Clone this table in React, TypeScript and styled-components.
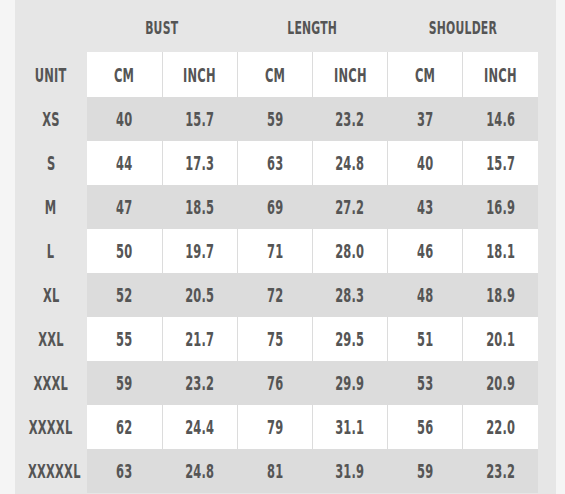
import * as React from "react";
import styled, { createGlobalStyle } from "styled-components";

const GlobalStyle = createGlobalStyle`
  html, body {
    margin: 0;
    padding: 0;
    background-color: #f5f5f5;
  }
`;

const Page = styled.div`
  width: 565px;
  height: 494px;
  overflow: hidden;
  background-color: #f5f5f5;
`;

const Panel = styled.div`
  margin-left: 15px;
  width: 541px;
  height: 494px;
  box-sizing: border-box;
  padding-right: 18px;
  background-color: #e6e6e6;
`;

const Table = styled.table`
  width: 523px;
  border-collapse: collapse;
  border-spacing: 0;
  table-layout: fixed;
  font-family: "DejaVu Sans Condensed", "DejaVu Sans", sans-serif;
  font-weight: 700;
  font-size: 19px;
  color: #555555;
  text-align: center;
`;

const UnitCol = styled.col`
  width: 72px;
`;

const GroupHead = styled.th`
  box-sizing: border-box;
  height: 52px;
  padding: 3px 0 0;
  font-size: 18px;
  font-weight: 700;
  vertical-align: middle;
`;

const Row = styled.tr<{ $shaded?: boolean }>`
  height: ${(p) => (p.$shaded !== undefined ? "44px" : "45px")};
  background-color: ${(p) => (p.$shaded ? "#dcdcdc" : "#ffffff")};
`;

const SizeCell = styled.td`
  padding: 0;
  background-color: #e6e6e6;
`;

const Cell = styled.td<{ $shaded?: boolean }>`
  padding: 0;
  & + & {
    border-left: 1px solid ${(p) => (p.$shaded ? "#dcdcdc" : "#e2e2e2")};
  }
`;

// condensed display lettering
const Label = styled.span`
  display: inline-block;
  transform: scaleX(0.67);
  letter-spacing: 0.3px;
`;

const sizes: [string, string[]][] = [
  ["XS", ["40", "15.7", "59", "23.2", "37", "14.6"]],
  ["S", ["44", "17.3", "63", "24.8", "40", "15.7"]],
  ["M", ["47", "18.5", "69", "27.2", "43", "16.9"]],
  ["L", ["50", "19.7", "71", "28.0", "46", "18.1"]],
  ["XL", ["52", "20.5", "72", "28.3", "48", "18.9"]],
  ["XXL", ["55", "21.7", "75", "29.5", "51", "20.1"]],
  ["XXXL", ["59", "23.2", "76", "29.9", "53", "20.9"]],
  ["XXXXL", ["62", "24.4", "79", "31.1", "56", "22.0"]],
  ["XXXXXL", ["63", "24.8", "81", "31.9", "59", "23.2"]],
];

const App: React.FC = () => {
  return (
    <Page>
      <GlobalStyle />
      <Panel>
        <Table>
          <colgroup>
            <UnitCol />
            <col />
            <col />
            <col />
            <col />
            <col />
            <col />
          </colgroup>
          <thead>
            <tr>
              <GroupHead />
              <GroupHead colSpan={2}>
                <Label>BUST</Label>
              </GroupHead>
              <GroupHead colSpan={2}>
                <Label>LENGTH</Label>
              </GroupHead>
              <GroupHead colSpan={2}>
                <Label>SHOULDER</Label>
              </GroupHead>
            </tr>
          </thead>
          <tbody>
            <Row>
              <SizeCell>
                <Label>UNIT</Label>
              </SizeCell>
              {["CM", "INCH", "CM", "INCH", "CM", "INCH"].map((u, i) => (
                <Cell key={i}>
                  <Label>{u}</Label>
                </Cell>
              ))}
            </Row>
            {sizes.map(([size, values], r) => {
              const shaded = r % 2 === 0;
              return (
                <Row key={size} $shaded={shaded}>
                  <SizeCell>
                    <Label>{size}</Label>
                  </SizeCell>
                  {values.map((v, i) => (
                    <Cell key={i} $shaded={shaded}>
                      <Label>{v}</Label>
                    </Cell>
                  ))}
                </Row>
              );
            })}
          </tbody>
        </Table>
      </Panel>
    </Page>
  );
};

export default App;
